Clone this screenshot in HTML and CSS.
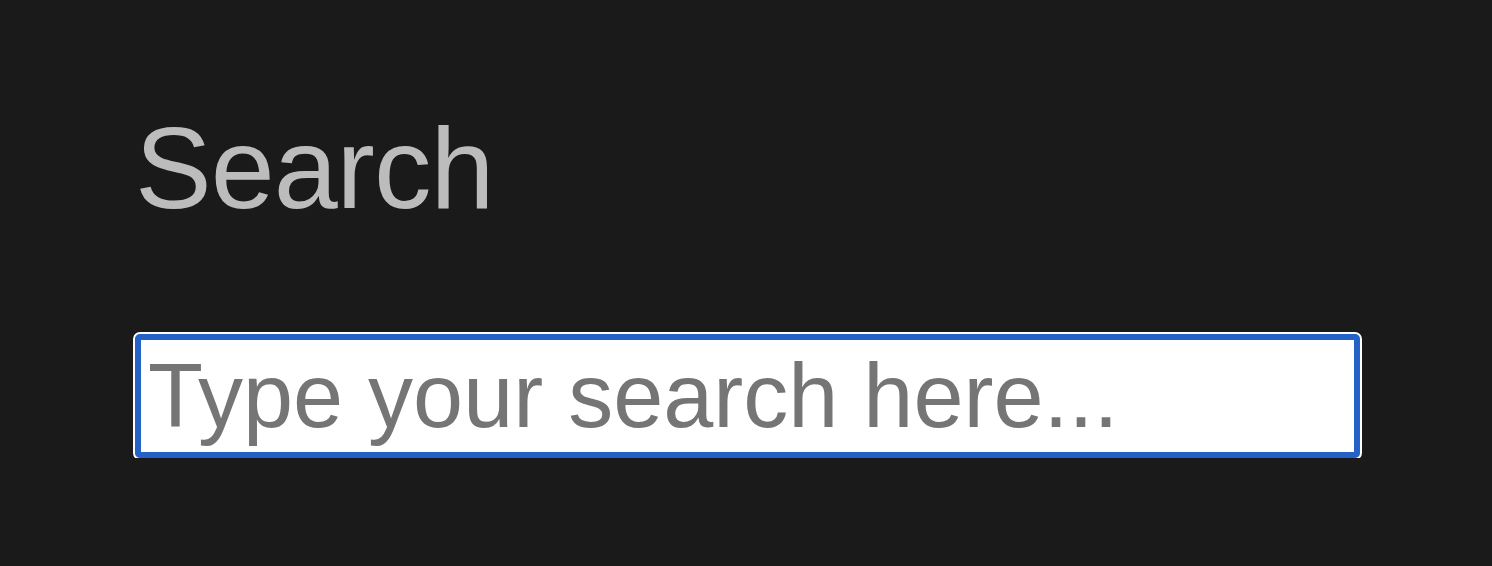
FILE: index.html
```html
<!DOCTYPE html>
<html lang="en">
<head>
<meta charset="utf-8">
<title>Search</title>
<link rel="stylesheet" href="styles.css">
</head>
<body>
<main class="page">
  <h1 class="title">Search</h1>
  <input class="search-input" type="text" placeholder="Type your search here...">
</main>
</body>
</html>
```
FILE: styles.css
```css
html, body {
  margin: 0;
  padding: 0;
  background: #1a1a1a;
}

.page {
  display: flex;
  flex-direction: column;
  align-items: flex-start;
  padding: 111px 0 0 135px;
}

.title {
  margin: 0 0 108px 0;
  font-family: "Liberation Sans", Arial, sans-serif;
  font-weight: 400;
  font-size: 115px;
  line-height: 115px;
  letter-spacing: -1px;
  color: #bcbcbc;
}

.search-input {
  box-sizing: border-box;
  width: 1225px;
  height: 124px;
  margin: 0;
  padding: 0 0 0 7px;
  border: 6px solid #2462c8;
  border-radius: 5px;
  outline: 2px solid #ffffff;
  outline-offset: 0;
  background: #ffffff;
  font-family: "Liberation Sans", Arial, sans-serif;
  font-size: 90px;
  color: #222222;
}

.search-input::placeholder {
  color: #757575;
  opacity: 1;
}
```
